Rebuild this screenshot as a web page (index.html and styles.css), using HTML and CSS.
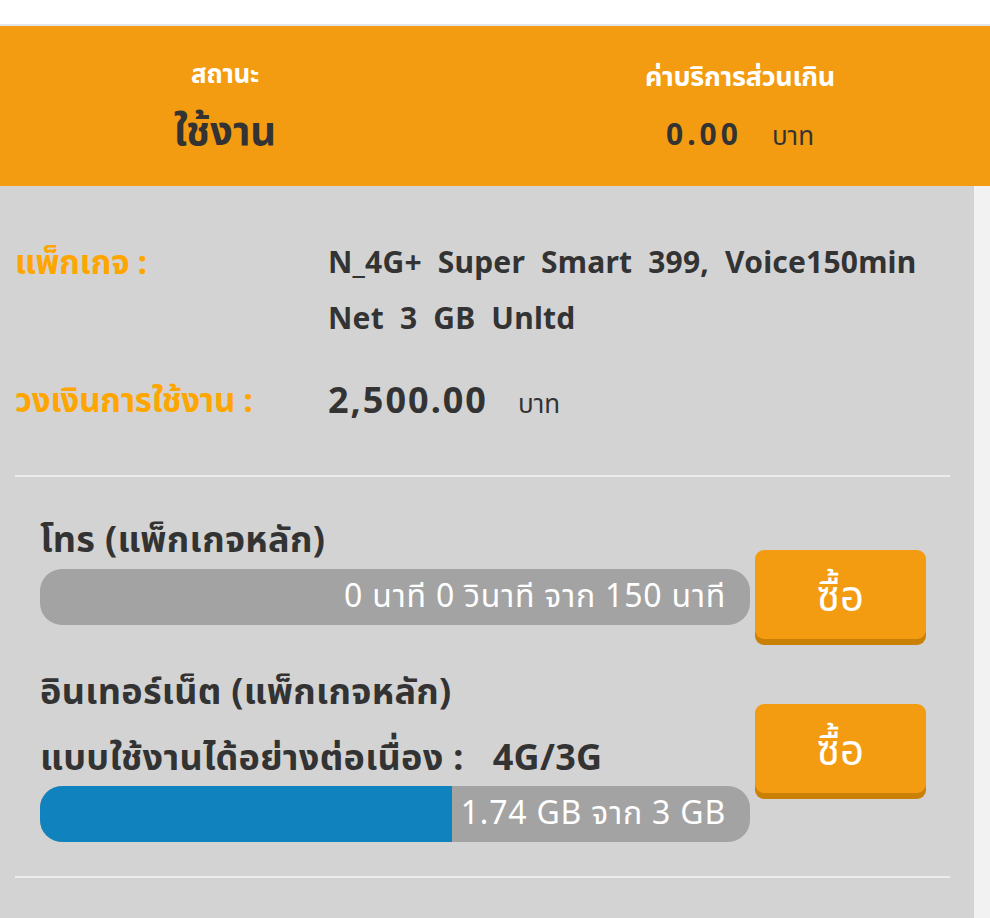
FILE: index.html
```html
<!DOCTYPE html>
<html lang="th">
<head>
<meta charset="utf-8">
<title>Package</title>
<link rel="stylesheet" href="styles.css">
</head>
<body>
<div class="topbar"></div>
<header class="status">
  <div class="status-col">
    <div class="status-label">สถานะ</div>
    <div class="status-value">ใช้งาน</div>
  </div>
  <div class="status-col">
    <div class="status-label">ค่าบริการส่วนเกิน</div>
    <div class="status-value"><span class="num">0.00</span><span class="unit">บาท</span></div>
  </div>
</header>
<main class="panel">
  <div class="info">
    <div class="info-label">แพ็กเกจ :</div>
    <div class="info-value pkg">N_4G+ Super Smart 399, Voice150min<br>Net 3 GB Unltd</div>
    <div class="info-label">วงเงินการใช้งาน :</div>
    <div class="info-value"><span class="num">2,500.00</span><span class="unit">บาท</span></div>
  </div>
  <hr class="divider">
  <section class="usage usage-call">
    <div class="usage-body">
      <div class="usage-title">โทร (แพ็กเกจหลัก)</div>
      <div class="bar"><span class="bar-text">0 นาที 0 วินาที จาก 150 นาที</span></div>
    </div>
    <button class="buy">ซื้อ</button>
  </section>
  <section class="usage usage-net">
    <div class="usage-body">
      <div class="usage-title">อินเทอร์เน็ต (แพ็กเกจหลัก)</div>
      <div class="usage-title sub">แบบใช้งานได้อย่างต่อเนื่อง :&nbsp;&nbsp; 4G/3G</div>
      <div class="bar"><div class="bar-fill" style="width:58%"></div><span class="bar-text">1.74 GB จาก 3 GB</span></div>
    </div>
    <button class="buy">ซื้อ</button>
  </section>
  <hr class="divider last">
</main>
</body>
</html>
```
FILE: styles.css
```css
html, body {
  margin: 0;
  padding: 0;
}
body {
  background: #f2f2f2;
  font-family: "Noto Sans", "Noto Sans Thai", "DejaVu Sans", sans-serif;
  color: #333333;
  width: 990px;
  height: 918px;
  overflow: hidden;
}
.topbar {
  height: 24px;
  background: #ffffff;
  border-bottom: 2px solid #e3e6ea;
}
.status {
  background: #f39c12;
  height: 160px;
  display: grid;
  grid-template-columns: 450px 1fr;
  column-gap: 40px;
  align-content: start;
  padding-top: 29px;
  box-sizing: border-box;
}
.status-col {
  text-align: center;
}
.status-label {
  color: #ffffff;
  font-weight: 700;
  font-size: 26px;
  line-height: 36px;
  letter-spacing: -0.3px;
}
.status-col + .status-col .status-label {
  margin-top: 3px;
  font-size: 27px;
}
.status-value {
  margin-top: 11px;
  font-weight: 700;
  font-size: 40px;
  line-height: 56px;
  color: #333333;
}
.status-col + .status-col .status-value {
  margin-top: 8px;
}
.status-value .num {
  font-size: 30px;
  letter-spacing: 4px;
}
.unit {
  font-weight: 400;
  font-size: 26px;
  letter-spacing: 0;
  margin-left: 30px;
}
.panel {
  width: 974px;
  background: #d3d3d3;
  min-height: 732px;
  padding: 48px 24px 0 15px;
  box-sizing: border-box;
}
.info {
  display: grid;
  grid-template-columns: 313px 1fr;
  row-gap: 26px;
}
.info-label {
  color: #ffa500;
  font-weight: 700;
  font-size: 33px;
  line-height: 56px;
  letter-spacing: -0.2px;
}
.info-value {
  font-weight: 700;
  font-size: 30px;
  line-height: 56px;
}
.pkg {
  word-spacing: 8px;
  letter-spacing: 0.2px;
}
.info-value .num {
  font-size: 36px;
  letter-spacing: 2px;
}
.divider {
  border: 0;
  border-top: 2px solid #ececec;
  margin: 44px 0 0 0;
  width: 935px;
}
.usage {
  display: flex;
  align-items: flex-start;
  padding-left: 25px;
  column-gap: 5px;
}
.usage-call {
  margin-top: 42px;
}
.usage-net {
  margin-top: 32px;
}
.usage-body {
  width: 710px;
}
.usage-title {
  font-weight: 700;
  font-size: 36px;
  line-height: 40px;
  letter-spacing: 0.3px;
  white-space: nowrap;
}
.usage-title.sub {
  margin-top: 26px;
}
.bar {
  position: relative;
  margin-top: 10px;
  height: 56px;
  border-radius: 22px;
  background: #a3a3a3;
  overflow: hidden;
  display: flex;
  justify-content: flex-end;
  align-items: center;
}
.usage-net .bar {
  margin-top: 9px;
}
.bar-fill {
  position: absolute;
  left: 0;
  top: 0;
  bottom: 0;
  background: #1083be;
}
.bar-text {
  position: relative;
  color: #ffffff;
  font-size: 32px;
  letter-spacing: 0.8px;
  padding-right: 24px;
}
.buy {
  margin-top: 31px;
  width: 171px;
  height: 89px;
  border: 0;
  border-radius: 9px;
  background: #f39c12;
  box-shadow: 0 6px 0 #c98005;
  color: #ffffff;
  font-family: inherit;
  font-size: 42px;
  line-height: 1;
  padding: 0;
  cursor: pointer;
}
.usage-net .buy {
  margin-top: 33px;
}
.divider.last {
  margin-top: 34px;
}
```
